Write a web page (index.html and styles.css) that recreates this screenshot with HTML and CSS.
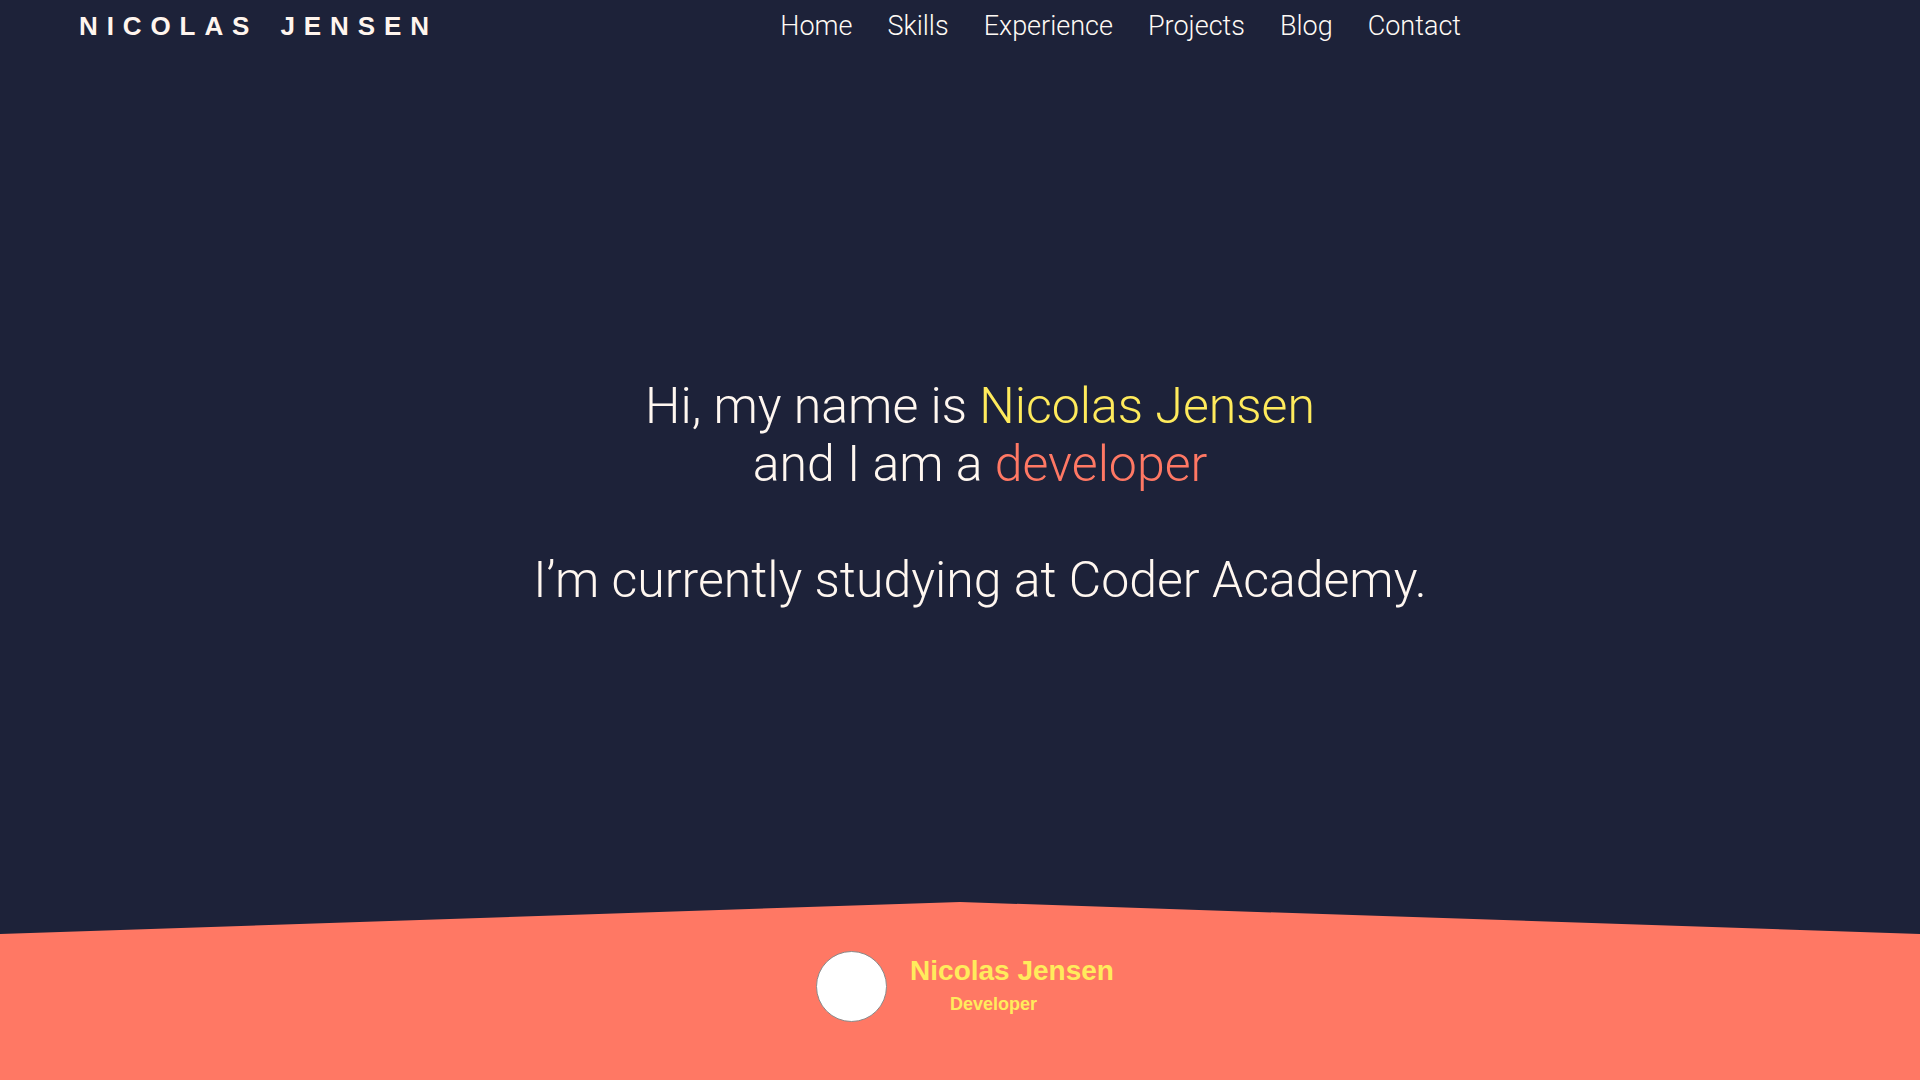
FILE: index.html
```html
<!DOCTYPE html>
<html lang="en">
<head>
<meta charset="utf-8">
<title>Nicolas Jensen</title>
<link rel="stylesheet" href="styles.css">
</head>
<body>
<header class="site-header">
  <div class="logo">NICOLAS JENSEN</div>
  <nav class="nav">
    <a href="#">Home</a>
    <a href="#">Skills</a>
    <a href="#">Experience</a>
    <a href="#">Projects</a>
    <a href="#">Blog</a>
    <a href="#">Contact</a>
  </nav>
</header>
<main class="hero">
  <p class="intro">Hi, my name is <span class="name">Nicolas Jensen</span><br>and I am a <span class="role">developer</span></p>
  <p class="study">I’m currently studying at Coder Academy.</p>
</main>
<footer class="site-footer">
  <div class="avatar"></div>
  <div class="card-text">
    <div class="card-name">Nicolas Jensen</div>
    <div class="card-role">Developer</div>
  </div>
</footer>
</body>
</html>
```
FILE: styles.css
```css
* { box-sizing: border-box; }
html, body { margin: 0; padding: 0; }
body {
  width: 1920px;
  height: 1080px;
  overflow: hidden;
  background: #1d2239;
  color: #fff7f0;
  display: flex;
  flex-direction: column;
  font-family: Roboto, "Liberation Sans", sans-serif;
}
.site-header {
  display: flex;
  align-items: baseline;
  padding: 10px 459px 0 79px;
  height: 42px;
}
.logo {
  font-family: "Liberation Sans", Arial, sans-serif;
  font-weight: 700;
  font-size: 26px;
  letter-spacing: 8.9px;
  word-spacing: 6px;
  color: #fff5ee;
}
.nav {
  margin-left: auto;
  display: flex;
  gap: 35px;
}
.nav a {
  font-family: Roboto, "Liberation Sans", sans-serif;
  font-weight: 300;
  font-size: 27px;
  color: #fffaf5;
  text-decoration: none;
}
.hero {
  flex: 1;
  padding: 336px 0 0 40px;
  text-align: center;
  font-weight: 300;
  font-size: 50px;
  line-height: 57.5px;
}
.hero p { margin: 0; }
.intro { margin-bottom: 59px !important; }
.name { color: #ffeb5c; }
.role { color: #ff7864; }
.site-footer {
  height: 178px;
  background: #ff7864;
  clip-path: polygon(0 32px, 50% 0, 100% 32px, 100% 100%, 0 100%);
  display: flex;
  justify-content: center;
  align-items: flex-start;
  gap: 23px;
  padding: 49px 0 0 10px;
}
.avatar {
  width: 71px;
  height: 71px;
  border-radius: 50%;
  background: #ffffff;
  border: 1px solid #8a8a8a;
}
.card-text {
  margin-top: 4px;
  font-family: "Liberation Sans", Arial, sans-serif;
  font-weight: 700;
  color: #ffeb5c;
}
.card-name { font-size: 28px; line-height: 31px; }
.card-role { font-size: 18px; line-height: 20px; padding-left: 40px; margin-top: 8px; }
```
